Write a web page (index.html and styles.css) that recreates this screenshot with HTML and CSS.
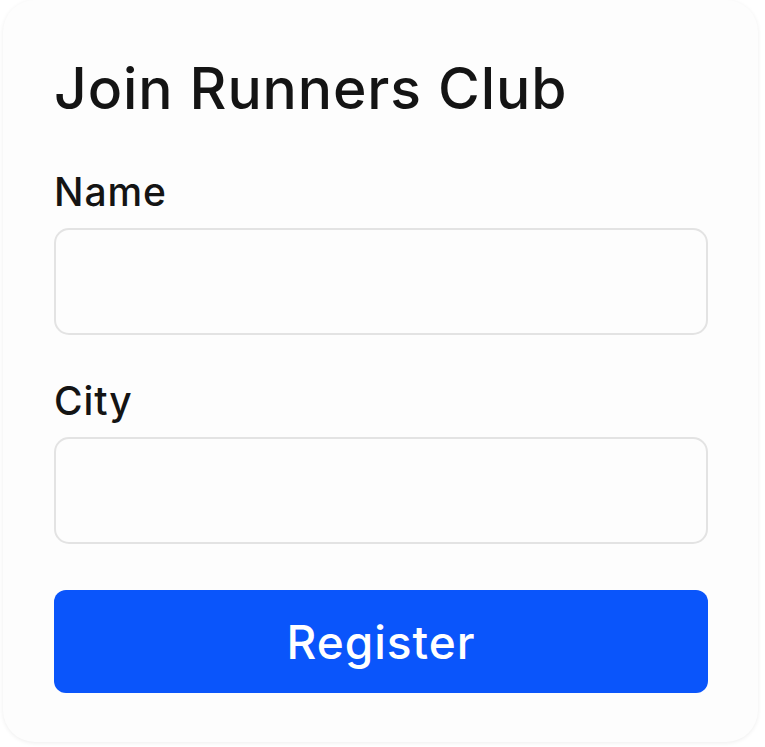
FILE: index.html
```html
<!DOCTYPE html>
<html>
<head>
    <meta charset="UTF-8">
    <link rel="stylesheet" href="styles.css">
</head>
<body>
    <div class="card">
        <h1 class="title">Join Runners Club</h1>

        <form class="signup-form" onsubmit="return false">
            <label class="field">
                <span class="field-label">Name</span>
                <input class="field-input" type="text" name="name">
            </label>

            <label class="field">
                <span class="field-label">City</span>
                <input class="field-input" type="text" name="city">
            </label>

            <button class="register-btn" type="submit">Register</button>
        </form>
    </div>
</body>
</html>
```

FILE: styles.css
```css
* {
    margin: 0;
    padding: 0;
    box-sizing: border-box;
}

body {
    font-family: Inter, 'Noto Sans', sans-serif;
    background: #ffffff;
    color: #141414;
    padding: 0 7px 5px 3px;
}

.card {
    background: #fdfdfd;
    border-radius: 32px;
    box-shadow: 0 1px 4px rgba(0, 0, 0, 0.07);
    height: 742px;
    padding: 59px 50px 0 51px;
}

.title {
    font-size: 57px;
    font-weight: 500;
    letter-spacing: 0.9px;
    line-height: 60px;
    margin-bottom: 52px;
}

.signup-form {
    display: flex;
    flex-direction: column;
}

.field {
    display: flex;
    flex-direction: column;
    margin-bottom: 45px;
}

.field-label {
    font-size: 39px;
    font-weight: 500;
    letter-spacing: 0.9px;
    line-height: 42px;
    margin-bottom: 15px;
}

.field-input {
    height: 107px;
    border: 2px solid #e3e3e3;
    border-radius: 15px;
    background: #fdfdfd;
    font: inherit;
    font-size: 28px;
    padding: 0 20px;
    outline: none;
}

.register-btn {
    height: 103px;
    margin-top: 1px;
    border: none;
    border-radius: 12px;
    background: #0a55fb;
    color: #ffffff;
    font-family: inherit;
    font-size: 46px;
    font-weight: 500;
    letter-spacing: 1px;
    cursor: pointer;
}
```
